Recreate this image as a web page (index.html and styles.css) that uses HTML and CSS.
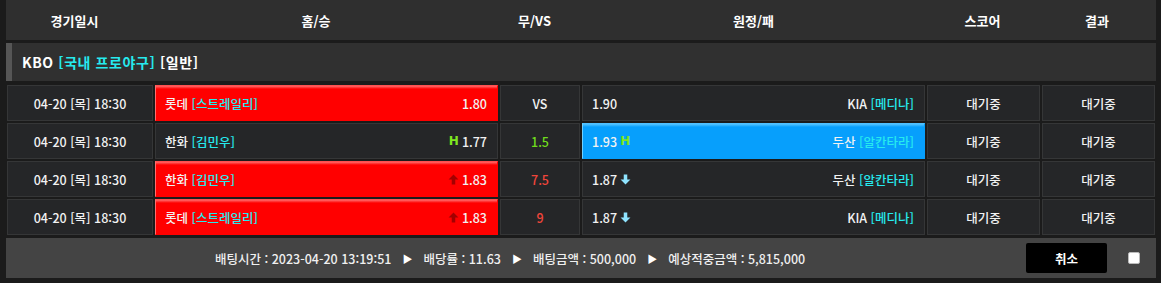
FILE: index.html
```html
<!DOCTYPE html>
<html lang="ko">
<head>
<meta charset="utf-8">
<link rel="stylesheet" href="styles.css">
</head>
<body>
<div class="board">
  <div class="thead">
    <div>경기일시</div>
    <div>홈/승</div>
    <div>무/VS</div>
    <div>원정/패</div>
    <div>스코어</div>
    <div>결과</div>
  </div>
  <div class="league">
    <span class="stripe"></span>
    <span class="league-name">KBO <span class="cyan">[국내 프로야구]</span> [일반]</span>
  </div>
  <div class="rows">
    <div class="row">
      <div class="cell">04-20 [목] 18:30</div>
      <div class="cell pick red"><span>롯데 <span class="cyan">[스트레일리]</span></span><span class="odds">1.80</span></div>
      <div class="cell">VS</div>
      <div class="cell pick"><span class="odds">1.90</span><span>KIA <span class="cyan">[메디나]</span></span></div>
      <div class="cell">대기중</div>
      <div class="cell">대기중</div>
    </div>
    <div class="row">
      <div class="cell">04-20 [목] 18:30</div>
      <div class="cell pick"><span>한화 <span class="cyan">[김민우]</span></span><span class="odds"><span class="h">H</span>1.77</span></div>
      <div class="cell green">1.5</div>
      <div class="cell pick blue"><span class="odds">1.93<span class="h">H</span></span><span>두산 <span class="cyan">[알칸타라]</span></span></div>
      <div class="cell">대기중</div>
      <div class="cell">대기중</div>
    </div>
    <div class="row">
      <div class="cell">04-20 [목] 18:30</div>
      <div class="cell pick red"><span>한화 <span class="cyan">[김민우]</span></span><span class="odds"><svg class="arr" viewBox="0 0 10 10" width="11" height="11"><path d="M5 0.5 L9.5 5 L6.6 5 L6.6 9.5 L3.4 9.5 L3.4 5 L0.5 5 Z" fill="#a30000"/></svg>1.83</span></div>
      <div class="cell redtxt">7.5</div>
      <div class="cell pick"><span class="odds">1.87<svg class="arr" viewBox="0 0 10 10" width="11" height="11"><path d="M5 9.5 L9.5 5 L6.6 5 L6.6 0.5 L3.4 0.5 L3.4 5 L0.5 5 Z" fill="#8fe4ff"/></svg></span><span>두산 <span class="cyan">[알칸타라]</span></span></div>
      <div class="cell">대기중</div>
      <div class="cell">대기중</div>
    </div>
    <div class="row">
      <div class="cell">04-20 [목] 18:30</div>
      <div class="cell pick red"><span>롯데 <span class="cyan">[스트레일리]</span></span><span class="odds"><svg class="arr" viewBox="0 0 10 10" width="11" height="11"><path d="M5 0.5 L9.5 5 L6.6 5 L6.6 9.5 L3.4 9.5 L3.4 5 L0.5 5 Z" fill="#a30000"/></svg>1.83</span></div>
      <div class="cell redtxt">9</div>
      <div class="cell pick"><span class="odds">1.87<svg class="arr" viewBox="0 0 10 10" width="11" height="11"><path d="M5 9.5 L9.5 5 L6.6 5 L6.6 0.5 L3.4 0.5 L3.4 5 L0.5 5 Z" fill="#8fe4ff"/></svg></span><span>KIA <span class="cyan">[메디나]</span></span></div>
      <div class="cell">대기중</div>
      <div class="cell">대기중</div>
    </div>
  </div>
  <div class="foot">
    <div class="summary">
      <span>배팅시간 : 2023-04-20 13:19:51</span>
      <span class="tri">▶</span>
      <span>배당률 : 11.63</span>
      <span class="tri">▶</span>
      <span>배팅금액 : 500,000</span>
      <span class="tri">▶</span>
      <span>예상적중금액 : 5,815,000</span>
    </div>
    <button class="cancel">취소</button>
    <span class="check"></span>
  </div>
</div>
</body>
</html>
```

FILE: styles.css
```css
* { box-sizing: border-box; }
html, body { margin: 0; padding: 0; }
body {
  background: #1b1b1b;
  font-family: "Noto Sans CJK KR", "Noto Sans", sans-serif;
  font-size: 12.5px;
  font-weight: 500;
  color: #f4f4f4;
  width: 1161px;
  height: 283px;
  overflow: hidden;
}
.board {
  width: 1150px;
  margin-left: 6px;
  display: flex;
  flex-direction: column;
}
.thead {
  height: 40px;
  background: #2f2f2f;
  display: grid;
  grid-template-columns: 137px 346px 91px 347px 111px 1fr;
  align-items: center;
  font-weight: bold;
  font-size: 13px;
  text-align: center;
  color: #ffffff;
}
.league {
  margin-top: 3px;
  height: 38px;
  background: #303030;
  display: flex;
  align-items: center;
  font-weight: bold;
  font-size: 14px;
  letter-spacing: 0.6px;
  color: #ffffff;
}
.stripe {
  width: 6px;
  height: 100%;
  background: #565656;
}
.league-name { margin-left: 10px; }
.cyan { color: #26eaee; }
.rows {
  margin-top: 4px;
  padding: 0 1px;
  display: flex;
  flex-direction: column;
  gap: 2px;
}
.row {
  display: grid;
  grid-template-columns: 146px 343px 80px 343px 113px 113px;
  gap: 2px;
  height: 36px;
}
.cell {
  background: #252628;
  border: 1px solid #353637;
  display: flex;
  align-items: center;
  justify-content: center;
  color: #f2f2f2;
}
.pick {
  justify-content: space-between;
  padding: 0 10px 0 9px;
}
.red {
  background: linear-gradient(#ff6a6a 0, #ff0000 3px, #ff0000 100%);
  border-color: #ff5050 #ff0000 #ff0000 #ff7070;
}
.blue {
  background: linear-gradient(#55c4ff 0, #079ffc 3px, #079ffc 100%);
  border-color: #4fc0ff #079ffc #079ffc #6fd0ff;
}
.odds {
  display: inline-flex;
  align-items: center;
  gap: 3px;
}
.h {
  color: #7fe620;
  font-weight: bold;
  font-family: "DejaVu Sans", sans-serif;
  font-size: 12px;
}
.arr { display: block; }
.green { color: #6fdc1c; }
.redtxt { color: #f0453a; }
.foot {
  margin-top: 3px;
  height: 40px;
  background: #444444;
  display: flex;
  align-items: center;
  padding: 0 16px 0 209px;
}
.summary {
  display: flex;
  align-items: center;
  gap: 11px;
  font-size: 12.5px;
  color: #f0f0f0;
  flex: 1;
}
.tri { font-size: 10px; color: #ffffff; }
.cancel {
  width: 81px;
  height: 30px;
  background: #000000;
  border: none;
  border-radius: 2px;
  color: #ffffff;
  font-family: "Noto Sans CJK KR", sans-serif;
  font-size: 12.5px;
  font-weight: bold;
  margin-right: 21px;
}
.check {
  width: 12px;
  height: 12px;
  background: #ffffff;
  border: 1px solid #bbbbbb;
  border-radius: 2px;
}
```
